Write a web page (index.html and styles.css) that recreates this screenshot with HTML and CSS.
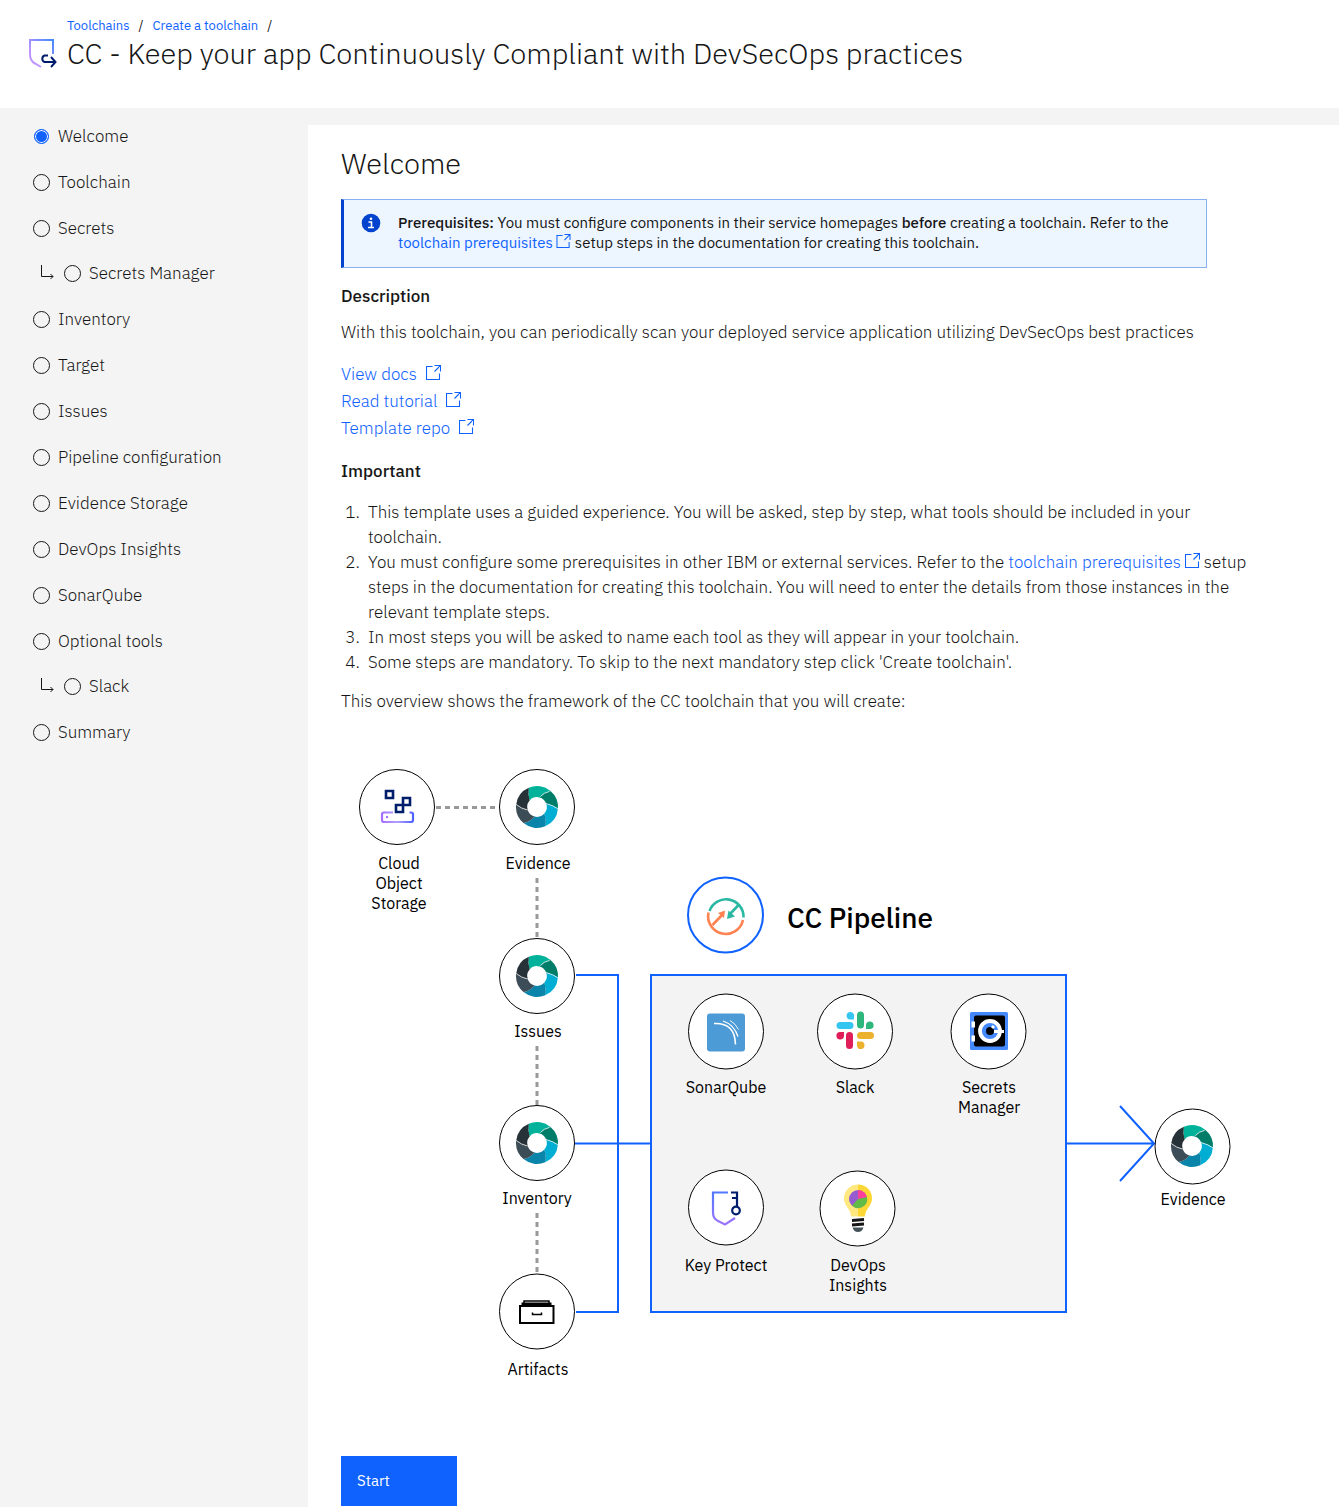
FILE: index.html
```html
<!DOCTYPE html>
<html lang="en">
<head>
<meta charset="utf-8">
<title>CC - Keep your app Continuously Compliant with DevSecOps practices</title>
<meta name="viewport" content="width=device-width, initial-scale=1">
<link rel="stylesheet" href="styles.css">
</head>
<body>
<svg class="sprite" aria-hidden="true">
  <defs>
    <symbol id="launch" viewBox="0 0 15 15">
      <path d="M6.500 1.500H.5V14.500H13.500V8.500M8.500 .5H14.500V6.500M14.500 .5L8.500 6.500" fill="none" stroke="currentColor" stroke-width="1.100"/>
    </symbol>
    <symbol id="elbow" viewBox="0 0 16 16">
      <path d="M2.500 1V12.500H14M11.500 10L14 12.500L11.500 15" fill="none" stroke="currentColor"/>
    </symbol>
    <symbol id="ring" viewBox="-22 -22 44 44">
      <path fill="#00b299" d="M-8.200-19.300A21 21 0 0 1 13.500-16.100Q6.500-14.700 2.500-9.500A9.800 9.800 0 0 0-7.300-6.600Q-9.500-13-8.200-19.300Z"/>
      <path fill="#007d69" d="M13.500-16.100A21 21 0 0 1 20.900 1.800Q16-1.700 9.200-3.400A9.800 9.800 0 0 0 2.500-9.500Q6.500-14.700 13.500-16.100Z"/>
      <path fill="#00aed3" d="M20.900 1.800A21 21 0 0 1 8.200 19.300Q9.500 13 7.300 6.600A9.800 9.800 0 0 0 9.200-3.400Q16-1.700 20.900 1.800Z"/>
      <path fill="#0a84a8" d="M8.200 19.300A21 21 0 0 1-13.500 16.100Q-6.500 14.700-2.500 9.500A9.800 9.800 0 0 0 7.300 6.600Q9.500 13 8.200 19.300Z"/>
      <path fill="#3d4d57" d="M-13.500 16.100A21 21 0 0 1-20.800-2.600Q-16 1.700-9.300 3A9.800 9.800 0 0 0-2.500 9.500Q-6.500 14.700-13.500 16.100Z"/>
      <path fill="#263238" d="M-20.800-2.600A21 21 0 0 1-8.200-19.300Q-9.500-13-7.300-6.600A9.800 9.800 0 0 0-9.300 3Q-16 1.700-20.800-2.600Z"/>
      <path fill="none" stroke="#fff" stroke-width=".7" d="M3.500-10.500Q7-14.500 12.500-15.500M20.900 1.800Q16-1.700 9.200-3.400M-20.800-2.600Q-16 1.700-9.300 3"/>
    </symbol>
    <linearGradient id="shield-gradient" x1="0" y1="1" x2="1" y2="0">
      <stop offset=".3" stop-color="#be95ff"/><stop offset="1" stop-color="#4589ff"/>
    </linearGradient>
    <linearGradient id="tray-gradient" x1="0" y1="0" x2="1" y2="0">
      <stop offset="0" stop-color="#a56eff"/><stop offset=".5" stop-color="#b0a0ff"/><stop offset="1" stop-color="#4f60ff"/>
    </linearGradient>
    <linearGradient id="key-gradient" x1="0" y1="0" x2="0" y2="1">
      <stop offset="0" stop-color="#5278ff"/><stop offset="1" stop-color="#9d75fa"/>
    </linearGradient>
  </defs>
</svg>

<header class="page-header">
  <svg class="page-icon" viewBox="0 0 30 32" aria-hidden="true">
    <path d="M25 16V2H2V16Q2 23 7 25.500L13 29" fill="none" stroke="url(#shield-gradient)" stroke-width="2"/>
    <path d="M20 17.500H16.500A3.500 3.500 0 0 0 16.500 24H27M23 19L27.500 24L23 29" fill="none" stroke="#001d6c" stroke-width="2"/>
  </svg>
  <div>
    <nav class="breadcrumb" aria-label="Breadcrumb">
      <a href="#">Toolchains</a><span>/</span><a href="#">Create a toolchain</a><span>/</span>
    </nav>
    <h1>CC - Keep your app Continuously Compliant with DevSecOps practices</h1>
  </div>
</header>

<div class="layout">
  <form class="steps" aria-label="Steps">
    <label class="step"><input type="radio" name="step" checked>Welcome</label>
    <label class="step"><input type="radio" name="step">Toolchain</label>
    <label class="step"><input type="radio" name="step">Secrets</label>
    <label class="step step-nested"><svg class="elbow" aria-hidden="true"><use href="#elbow"/></svg><input type="radio" name="step">Secrets Manager</label>
    <label class="step"><input type="radio" name="step">Inventory</label>
    <label class="step"><input type="radio" name="step">Target</label>
    <label class="step"><input type="radio" name="step">Issues</label>
    <label class="step"><input type="radio" name="step">Pipeline configuration</label>
    <label class="step"><input type="radio" name="step">Evidence Storage</label>
    <label class="step"><input type="radio" name="step">DevOps Insights</label>
    <label class="step"><input type="radio" name="step">SonarQube</label>
    <label class="step"><input type="radio" name="step">Optional tools</label>
    <label class="step step-nested"><svg class="elbow" aria-hidden="true"><use href="#elbow"/></svg><input type="radio" name="step">Slack</label>
    <label class="step"><input type="radio" name="step">Summary</label>
  </form>

  <main class="content">
    <h2>Welcome</h2>
    <div class="notice">
      <svg class="notice-icon" viewBox="0 0 20 20" aria-hidden="true">
        <circle cx="10" cy="10" r="9.300" fill="#0043ce"/>
        <circle cx="10" cy="5.800" r="1.300" fill="#fff"/>
        <path d="M7.500 9H10.500V14M7 14.500H13" fill="none" stroke="#fff" stroke-width="1.600"/>
      </svg>
      <p><strong>Prerequisites:</strong> You must configure components in their service homepages <strong>before</strong> creating a toolchain. Refer to the <a href="#">toolchain prerequisites <svg class="launch" aria-hidden="true"><use href="#launch"/></svg></a> setup steps in the documentation for creating this toolchain.</p>
    </div>

    <h3>Description</h3>
    <p class="summary">With this toolchain, you can periodically scan your deployed service application utilizing DevSecOps best practices</p>
    <ul class="links">
      <li><a href="#">View docs <svg class="launch" aria-hidden="true"><use href="#launch"/></svg></a></li>
      <li><a href="#">Read tutorial <svg class="launch" aria-hidden="true"><use href="#launch"/></svg></a></li>
      <li><a href="#">Template repo <svg class="launch" aria-hidden="true"><use href="#launch"/></svg></a></li>
    </ul>

    <h3>Important</h3>
    <ol class="notes">
      <li>This template uses a guided experience. You will be asked, step by step, what tools should be included in your toolchain.</li>
      <li>You must configure some prerequisites in other IBM or external services. Refer to the <a href="#">toolchain prerequisites <svg class="launch" aria-hidden="true"><use href="#launch"/></svg></a> setup steps in the documentation for creating this toolchain. You will need to enter the details from those instances in the relevant template steps.</li>
      <li>In most steps you will be asked to name each tool as they will appear in your toolchain.</li>
      <li>Some steps are mandatory. To skip to the next mandatory step click 'Create toolchain'.</li>
    </ol>
    <p>This overview shows the framework of the CC toolchain that you will create:</p>

    <svg class="diagram" viewBox="0 0 900 640" role="img" aria-label="CC toolchain overview">
      <g class="dashed">
        <path d="M95 57.500H156"/>
        <path d="M196 128V189"/>
        <path d="M196 296V356"/>
        <path d="M196 463V524"/>
      </g>
      <rect class="pipeline-box" x="310" y="225" width="415" height="337"/>
      <g class="flow">
        <path d="M235 225H277V562H235"/>
        <path d="M234 393.500H310"/>
        <path d="M725 393.500H813M779 356L813 393.500L779 431"/>
      </g>

      <g class="node">
        <circle cx="56" cy="57" r="37.500"/><circle cx="196" cy="57" r="37.500"/>
        <circle cx="196" cy="226" r="37.500"/><circle cx="196" cy="393" r="37.500"/>
        <circle cx="196" cy="561.500" r="37.500"/><circle cx="385" cy="281.500" r="37.500"/>
        <circle cx="514" cy="281.500" r="37.500"/><circle cx="647.500" cy="281.500" r="37.500"/>
        <circle cx="385" cy="457.500" r="37.500"/><circle cx="516.500" cy="458.500" r="37.500"/>
        <circle cx="851.500" cy="396.500" r="37.500"/>
        <circle class="node-main" cx="384.500" cy="165" r="37.500"/>
      </g>

      <use href="#ring" x="174" y="35" width="44" height="44"/>
      <use href="#ring" x="174" y="204" width="44" height="44"/>
      <use href="#ring" x="174" y="371" width="44" height="44"/>
      <use href="#ring" x="829" y="374" width="44" height="44"/>

      <!-- object storage -->
      <g transform="translate(56 57)" fill="none">
        <path d="M-4 5.500H-13A2 2 0 0 0-15 7.500V13A2 2 0 0 0-13 15H14A2 2 0 0 0 16 13V7.500A2 2 0 0 0 14 5.500H12.500" stroke="url(#tray-gradient)" stroke-width="2.200"/>
        <circle cx="-10" cy="10" r="1.200" fill="#a56eff"/>
        <path d="M-11-16H-4V-9H-11ZM6-9H13V-2H6ZM-1-2H6V5H-1Z" stroke="#001d6c" stroke-width="2.600"/>
      </g>

      <!-- pipeline arrows -->
      <g transform="translate(385 165)" fill="none" stroke-width="2.600">
        <path d="M-16.500-4A17.500 17.500 0 0 1 17.500 2.500M13.500-11L4-1" stroke="#2bb8a3"/>
        <path d="M1 4L2.500-4.500L9 1.500Z" fill="#2bb8a3"/>
        <path d="M-17.500-2.500A17.500 17.500 0 0 0 17 5M-13.500 10L-3-1" stroke="#ff8251"/>
        <path d="M-1-4.500L-8-2L-2 3Z" fill="#ff8251"/>
      </g>

      <!-- sonarqube -->
      <g transform="translate(385 281.500)" fill="none" stroke="#fff">
        <rect x="-19" y="-18" width="38" height="38" rx="3" fill="#4c9bd6" stroke="none"/>
        <path d="M-12-8Q9-9 9.500 13" stroke-width="1.600"/>
        <path d="M-3-10.500Q8-7 12 5" stroke-width="1.300"/>
        <path d="M4-11Q9.500-8 12.500-2" stroke-width=".9"/>
      </g>

      <!-- slack -->
      <g transform="translate(514 280.500)">
        <g fill="#36c5f0"><rect x="-18.500" y="-8.500" width="17" height="7" rx="3.500"/><path d="M-1-11V-16A3.800 3.800 0 1 0-5-11Z"/></g>
        <g fill="#2eb67d"><rect x="2" y="-19" width="7" height="17" rx="3.500"/><path d="M11-1.500H15.500A3.800 3.800 0 1 0 11-5.500Z"/></g>
        <g fill="#ecb22e"><rect x="2" y="1.500" width="17" height="7" rx="3.500"/><path d="M2 11V15.500A3.800 3.800 0 1 0 6 11Z"/></g>
        <g fill="#e01e5a"><rect x="-9" y="1.500" width="7" height="17" rx="3.500"/><path d="M-11 1.500H-15.500A3.800 3.800 0 1 0-11 5Z"/></g>
      </g>

      <!-- secrets manager -->
      <g transform="translate(648 280.500)">
        <rect x="-19" y="-18.500" width="38" height="38" rx="1.500" fill="#4589ff"/>
        <rect x="-15" y="-15" width="31" height="31" rx="2"/>
        <path d="M-17.500-9H-14V-3H-17.500ZM-17.500 5H-14V11H-17.500Z" fill="#fff"/>
        <circle cx="1" cy=".5" r="10" fill="#4589ff" stroke="#fff" stroke-width="3.800"/>
        <circle cx="1" cy=".5" r="4"/>
        <path d="M3-2.500L5-4.500M5 1H15" stroke="#fff" stroke-width="3"/>
      </g>

      <!-- key protect -->
      <g transform="translate(385 457.500)" fill="none">
        <path d="M2-15H-13V5Q-13 11-8 13.500L-1 17L9 10.500" stroke="url(#key-gradient)" stroke-width="2.200"/>
        <path d="M5-15H11V-1M6-9.500H11" stroke="#001d6c" stroke-width="2.200"/>
        <circle cx="10" cy="3" r="3.800" stroke="#001d6c" stroke-width="2.200"/>
      </g>

      <!-- devops insights -->
      <g transform="translate(517 458.500)">
        <path d="M0-24A14 14 0 0 0-14-10C-14-2-7 0-7 8H0Z" fill="#ffe880"/>
        <path d="M0-24A14 14 0 0 1 14-10C14-2 7 0 7 8H0Z" fill="#fdd835"/>
        <circle cx="0" cy="-9.500" r="9" fill="#955cd1"/>
        <path d="M0-9.500V-18.500A9 9 0 0 1 9-10.500Z" fill="#ff3f9c"/>
        <path d="M0-9.500L9-11.500A9 9 0 0 1-6-3Z" fill="#62bb46"/>
        <path d="M-6 12L6 11M-6 16.500L6 15.500" stroke="#161616" stroke-width="3"/>
        <path d="M-5.500 19H5.500Q4 23.500 0 23.500Q-4 23.500-5.500 19Z" fill="#455358"/>
      </g>

      <!-- artifacts drawer -->
      <g transform="translate(196 561)" fill="none" stroke="#000">
        <path d="M-13-8V-10H12V-8" stroke-width="1.500"/>
        <path d="M-15.500-7H14.500" stroke-width="3"/>
        <path d="M-17-5H16.500V12H-17Z" stroke-width="2"/>
        <path d="M-4.500 1.500V3.500H4.500V1.500" stroke-width="1.500"/>
      </g>

      <g class="node-label">
        <text x="58" y="119">Cloud</text><text x="58" y="139">Object</text><text x="58" y="159">Storage</text>
        <text x="197" y="119">Evidence</text>
        <text x="197" y="287">Issues</text>
        <text x="196" y="454">Inventory</text>
        <text x="197" y="625">Artifacts</text>
        <text x="385" y="343">SonarQube</text>
        <text x="514" y="343">Slack</text>
        <text x="648" y="343">Secrets</text><text x="648" y="363">Manager</text>
        <text x="385" y="521">Key Protect</text>
        <text x="517" y="521">DevOps</text><text x="517" y="541">Insights</text>
        <text x="852" y="455">Evidence</text>
      </g>
      <text class="pipeline-title" x="446" y="178">CC Pipeline</text>
    </svg>

    <button class="start" type="button">Start</button>
  </main>
</div>
</body>
</html>
```
FILE: styles.css
```css
* {
  box-sizing: border-box;
}

body {
  margin: 0;
  min-height: 100vh;
  display: flex;
  flex-direction: column;
  background: #f4f4f4;
  color: #161616;
  font-family: "IBM Plex Sans", Roboto, "Liberation Sans", sans-serif;
  font-size: 17px;
  font-weight: 300;
  line-height: 25px;
}

h1,
h2,
h3,
p,
ul,
ol {
  margin: 0;
}

a {
  color: #0f62fe;
  text-decoration: none;
}

strong {
  font-weight: 500;
}

.sprite {
  position: absolute;
  width: 0;
  height: 0;
}

.page-header {
  display: flex;
  gap: 9px;
  min-height: 108px;
  padding: 16px 28px 32px;
  background: #fff;
}

.page-icon {
  flex: none;
  width: 30px;
  height: 32px;
  margin-top: 22px;
}

.breadcrumb {
  display: flex;
  gap: 9px;
  font-size: 13px;
  font-weight: 400;
  line-height: 19px;
}

h1,
h2 {
  font-size: 29px;
  font-weight: 300;
  line-height: 36px;
}

.layout {
  flex: 1;
  display: flex;
}

.steps {
  flex: none;
  width: 308px;
  padding: 5px 33px;
}

.step {
  display: flex;
  align-items: center;
  gap: 8px;
  height: 46px;
}

.step-nested {
  height: 45px;
  padding-left: 5px;
}

.elbow {
  width: 18px;
  height: 16px;
  margin-bottom: 4px;
}

.step input {
  appearance: none;
  width: 17px;
  height: 17px;
  margin: 0;
  border: 1px solid #161616;
  border-radius: 50%;
}

.step input:checked {
  width: 15px;
  height: 15px;
  margin: 0 1px;
  border-color: #0f62fe;
  background: #0f62fe;
  box-shadow: inset 0 0 0 1px #fff;
}

.content {
  flex: 1;
  min-width: 0;
  margin-top: 17px;
  padding: 20px 33px 1px;
  background: #fff;
}

.notice {
  display: flex;
  gap: 17px;
  max-width: 866px;
  margin: 18px 0 16px;
  padding: 13px 24px 14px 17px;
  border: 1px solid #8ab0f0;
  border-left: 3px solid #0043ce;
  background: #edf5ff;
  font-size: 15px;
  font-weight: 400;
  line-height: 20px;
}

.notice-icon {
  flex: none;
  width: 20px;
  height: 20px;
}

.launch {
  width: 15px;
  height: 15px;
}

.notice .launch {
  height: 14px;
}

h3 {
  font-size: 17px;
  font-weight: 500;
  line-height: 25px;
}

.summary {
  margin: 11px 0 16px;
}

.links {
  padding: 0;
  margin-bottom: 17px;
  line-height: 27px;
  list-style: none;
}

.links .launch {
  margin-left: 5px;
}

.notes {
  max-width: 912px;
  margin: 16px 0 14px;
  padding-left: 27px;
}

.notes li::marker {
  content: counter(list-item) ".\a0\a0";
}

.diagram {
  display: block;
  width: 100%;
  max-width: 900px;
  height: auto;
  margin: 36px 0 66px;
}

.dashed {
  fill: none;
  stroke: #999;
  stroke-width: 3;
  stroke-dasharray: 5 4;
}

.pipeline-box {
  fill: #f3f3f3;
  stroke: #0f62fe;
  stroke-width: 2;
}

.flow {
  fill: none;
  stroke: #0f62fe;
  stroke-width: 2;
}

.node {
  fill: #fff;
  stroke: #000;
  stroke-width: 1;
}

.node-main {
  stroke: #0f62fe;
  stroke-width: 2;
}

.node-label {
  font-size: 16px;
  font-weight: 400;
  text-anchor: middle;
}

.pipeline-title {
  font-size: 28px;
  font-weight: 500;
}

.start {
  display: block;
  width: 116px;
  height: 50px;
  padding: 0 16px;
  border: 0;
  background: #0f62fe;
  color: #fff;
  font: 400 15px/20px "IBM Plex Sans", Roboto, "Liberation Sans", sans-serif;
  text-align: left;
}
```
